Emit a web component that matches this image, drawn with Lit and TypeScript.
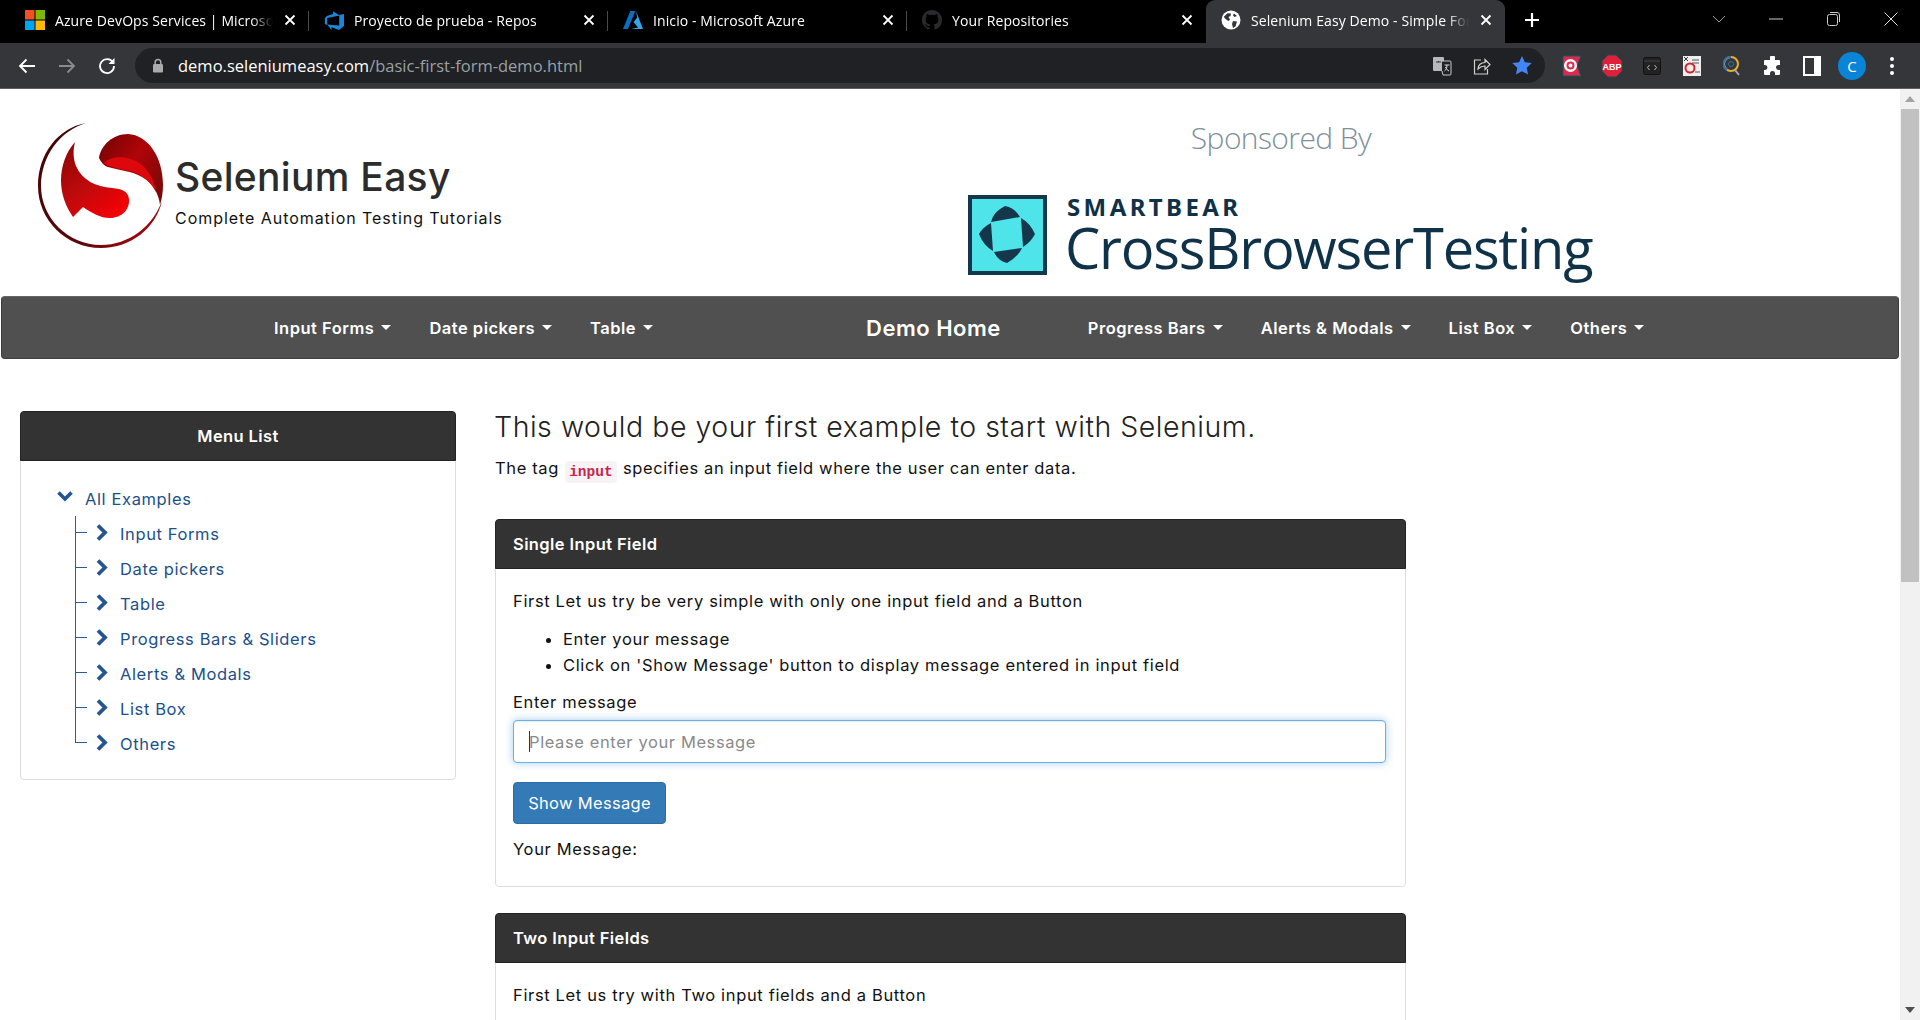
import { LitElement, html, css, svg } from 'lit';
import { customElement } from 'lit/decorators.js';

const chromeTabs = [
  { title: 'Azure DevOps Services | Microsoft Azure', icon: 'ms' },
  { title: 'Proyecto de prueba - Repos', icon: 'devops' },
  { title: 'Inicio - Microsoft Azure', icon: 'azure' },
  { title: 'Your Repositories', icon: 'github' },
  { title: 'Selenium Easy Demo - Simple Form to Automate', icon: 'globe', active: true },
];

const navLeft = ['Input Forms', 'Date pickers', 'Table'];
const navRight = ['Progress Bars', 'Alerts & Modals', 'List Box', 'Others'];
const menuItems = [
  'Input Forms',
  'Date pickers',
  'Table',
  'Progress Bars & Sliders',
  'Alerts & Modals',
  'List Box',
  'Others',
];

function tabIcon(name: string) {
  switch (name) {
    case 'ms':
      return html`<svg width="20" height="20" viewBox="0 0 20 20">
        <rect width="9.5" height="9.5" fill="#f25022" />
        <rect x="10.5" width="9.5" height="9.5" fill="#7fba00" />
        <rect y="10.5" width="9.5" height="9.5" fill="#00a4ef" />
        <rect x="10.5" y="10.5" width="9.5" height="9.5" fill="#ffb900" />
      </svg>`;
    case 'devops':
      return html`<svg width="20" height="20" viewBox="0 0 20 20">
        <path
          fill="#1a86d8"
          d="M20 4v12l-5 4-7.500-2.700V20L3.200 14.500l12 1V4.900zM15.800 5.500 9 1.200v2.900L2.700 5.900.8 8.400V14l2.400 1V8z"
        />
      </svg>`;
    case 'azure':
      return html`<svg width="20" height="20" viewBox="0 0 20 20">
        <path fill="#0a6fc2" d="M7.300 1h5L5 19H0z" />
        <path fill="#2fa7e8" d="M13 1l7 18h-12l7-1.500-4.500-5.500 3.700-4.500z" />
      </svg>`;
    case 'github':
      return html`<svg width="20" height="20" viewBox="0 0 16 16">
        <path
          fill="#2b2b2d"
          d="M8 0C3.580 0 0 3.580 0 8c0 3.540 2.290 6.530 5.470 7.590.4.070.55-.17.55-.38 0-.19-.01-.82-.01-1.490-2.010.37-2.530-.49-2.690-.94-.09-.23-.48-.94-.82-1.130-.28-.15-.68-.52-.01-.53.63-.01 1.080.58 1.230.82.720 1.210 1.870.87 2.330.66.070-.52.280-.87.510-1.070-1.780-.2-3.640-.89-3.640-3.950 0-.87.310-1.590.820-2.150-.08-.2-.36-1.020.08-2.120 0 0 .67-.21 2.200.82.640-.18 1.320-.27 2-.27s1.360.09 2 .27c1.530-1.040 2.200-.82 2.200-.82.440 1.100.16 1.920.08 2.120.51.560.82 1.270.82 2.150 0 3.070-1.870 3.750-3.650 3.950.29.250.54.730.54 1.480 0 1.070-.01 1.930-.01 2.200 0 .21.150.46.550.38A8.010 8.010 0 0 0 16 8c0-4.420-3.580-8-8-8z"
        />
      </svg>`;
    default:
      return html`<svg width="20" height="20" viewBox="0 0 20 20">
        <circle cx="10" cy="10" r="9.500" fill="#fff" />
        <path
          fill="#35363a"
          d="M3 6.500l3.500-3.300 3.500.3-.5 2.500-2 1 1.500 2.500-1.500 1.500-1-.5L3.500 8zM12 11l4 .5-1.500 5-2.500 1.500-1-4zM13 3.500l3 2.500-2.500 1-1.500-1.500z"
        />
      </svg>`;
  }
}

const closeX = html`<svg width="12" height="12" viewBox="0 0 12 12">
  <path d="M1.500 1.500l9 9M10.500 1.500l-9 9" stroke="#fff" stroke-width="1.800" />
</svg>`;

const caret = html`<svg class="caret" width="10" height="5" viewBox="0 0 10 5">
  <path d="M0 0h10L5 5z" fill="#fff" />
</svg>`;

const chevronRight = html`<svg class="chev" width="12" height="17" viewBox="0 0 12 17">
  <path d="M2 1.500l7 7-7 7" fill="none" stroke="#24558f" stroke-width="3.800" />
</svg>`;

const logoS = svg`
  <defs>
    <linearGradient id="lowGrad" x1="0.1" y1="0" x2="0.75" y2="1">
      <stop offset="0" stop-color="#8c0606" />
      <stop offset="0.55" stop-color="#c00a0c" />
      <stop offset="1" stop-color="#f50005" />
    </linearGradient>
    <linearGradient id="topGrad" x1="0" y1="0" x2="1" y2="0.8">
      <stop offset="0" stop-color="#6e0404" />
      <stop offset="0.5" stop-color="#b00408" />
      <stop offset="1" stop-color="#7a0808" />
    </linearGradient>
    <linearGradient id="ringGrad" x1="0" y1="0" x2="1" y2="1">
      <stop offset="0" stop-color="#3f0508" />
      <stop offset="0.65" stop-color="#5b060a" />
      <stop offset="1" stop-color="#c40a10" />
    </linearGradient>
  </defs>
  <path
    fill="url(#ringGrad)"
    d="M86 123C58 128 38 154 38 186C38 220 66 248 101 248C131 248 156 228 162 201C153 226 129 245 101 245C68 245 41 218 41 186C41 156 60 131 86 123Z"
  />
  <path
    fill="url(#topGrad)"
    d="M99 158C101 145 113 134 128 134C148 135 163 157 163 185C163 192 162 198 160 205C159 195 153 183 142 177C132 171 118 170 108 167C104 166 101 162 99 158Z"
  />
  <path
    fill="#dd080c"
    d="M104 163C112 155 130 155 142 165C150 172 155 183 156 192C150 180 140 174 130 171C120 168 110 168 104 163Z"
  />
  <path
    fill="url(#lowGrad)"
    d="M75 142C66 152 61 166 61 181C61 194 66 207 73 217L83 207C92 213 100 218 110 218C122 218 130 209 129 199C128 191 122 189 112 188C96 187 82 180 76 166C73 158 73 150 75 142Z"
  />
`;

@customElement('app-root')
export class AppRoot extends LitElement {
  static styles = css`
    :host {
      display: block;
      width: 1920px;
      height: 1020px;
      overflow: hidden;
      background: #fff;
      font-family: Inter, 'Liberation Sans', sans-serif;
      color: #111;
    }

    /* browser chrome */
    .tabstrip {
      height: 43px;
      background: #000;
      display: flex;
      align-items: stretch;
      padding-left: 10px;
      font-family: 'Open Sans', 'Noto Sans', sans-serif;
      font-size: 14px;
      color: #fff;
    }
    .tab {
      width: 299px;
      box-sizing: border-box;
      display: flex;
      align-items: center;
      padding: 0 9px 3px 15px;
      position: relative;
    }
    .tab:not(.active):not(.last)::after {
      content: '';
      position: absolute;
      right: 0;
      top: 11px;
      height: 20px;
      width: 1px;
      background: #4a4a4a;
    }
    .tab.active {
      background: #35363a;
      border-radius: 9px 9px 0 0;
    }
    .tab svg {
      flex: none;
    }
    .tab-title {
      flex: 1;
      margin-left: 10px;
      white-space: nowrap;
      overflow: hidden;
      letter-spacing: 0.1px;
      -webkit-mask-image: linear-gradient(to left, transparent 0, #000 22px);
    }
    .tab-close {
      width: 20px;
      margin-left: 7px;
      display: flex;
      justify-content: center;
    }
    .new-tab {
      width: 20px;
      margin-left: 19px;
      display: flex;
      align-items: center;
      padding-bottom: 3px;
    }
    .win-controls {
      margin-left: auto;
      display: flex;
      align-items: center;
      padding-bottom: 6px;
    }
    .win-controls span {
      width: 57.500px;
      display: flex;
      justify-content: center;
    }

    .toolbar {
      height: 46px;
      box-sizing: border-box;
      background: #35363a;
      border-bottom: 1px solid #5f6063;
      display: flex;
      align-items: center;
      padding-left: 7px;
      font-family: 'Open Sans', 'Noto Sans', sans-serif;
    }
    .tool {
      width: 40px;
      display: flex;
      align-items: center;
      justify-content: center;
      flex: none;
    }
    .omnibox {
      width: 1410px;
      box-sizing: border-box;
      height: 35px;
      margin: 0 7px 0 8px;
      padding-right: 3px;
      border-radius: 18px;
      background: #202124;
      display: flex;
      align-items: center;
      flex: none;
    }
    .lock {
      margin-left: 17px;
      width: 12px;
      flex: none;
    }
    .url {
      margin-left: 14px;
      flex: 1;
      font-size: 16.500px;
      color: #fff;
      white-space: nowrap;
    }
    .url span {
      color: #9aa0a6;
    }
    .avatar {
      width: 28px;
      height: 28px;
      border-radius: 50%;
      background: #0a84d6;
      color: #fff;
      font-size: 15px;
      display: flex;
      align-items: center;
      justify-content: center;
    }

    /* page */
    .viewport {
      display: flex;
      height: 931px;
    }
    .page {
      width: 1900px;
      height: 931px;
      overflow: hidden;
    }
    .scrollbar {
      width: 20px;
      background: #f1f1f1;
      display: flex;
      flex-direction: column;
      align-items: center;
    }
    .sb-btn {
      height: 20px;
      display: flex;
      align-items: center;
      justify-content: center;
    }
    .sb-thumb {
      width: 18px;
      height: 473px;
      background: #c1c1c1;
    }
    .sb-fill {
      flex: 1;
    }

    .site-header {
      height: 207px;
      display: flex;
    }
    .brand {
      width: 968px;
      flex: none;
      display: flex;
      padding: 33px 0 0 38px;
      box-sizing: border-box;
    }
    .brand svg {
      flex: none;
    }
    .brand-text {
      margin-left: 10px;
      padding-top: 29px;
    }
    .brand-name {
      font-size: 39px;
      line-height: 52px;
      font-weight: 500;
      letter-spacing: 0.3px;
      color: #2c2c2c;
      white-space: nowrap;
    }
    .brand-tag {
      font-size: 16px;
      line-height: 24px;
      margin-top: 3px;
      font-weight: 400;
      letter-spacing: 0.95px;
      color: #111;
      white-space: nowrap;
    }
    .sponsor {
      width: 640px;
      flex: none;
      font-family: 'Open Sans', 'Noto Sans', sans-serif;
      color: #0f3248;
    }
    .sponsor-title {
      width: 626px;
      text-align: center;
      font-size: 30px;
      line-height: 44px;
      font-weight: 300;
      color: #7f8f9b;
      margin-top: 27px;
      letter-spacing: -0.6px;
    }
    .sb-logo {
      display: flex;
      margin-top: 35px;
    }
    .sb-logo svg {
      flex: none;
    }
    .sb-words {
      margin-left: 20px;
      flex: none;
    }
    .sb-brand {
      font-size: 24px;
      line-height: 24px;
      font-weight: 700;
      letter-spacing: 3.400px;
      height: 24px;
      font-family: 'Noto Sans', sans-serif;
    }
    .sb-product {
      font-size: 56px;
      line-height: 58px;
      font-weight: 400;
      letter-spacing: -1.200px;
      margin: -1px 0 0 -2px;
      white-space: nowrap;
    }

    .nav {
      height: 63px;
      margin: 0 1px;
      background: #505050;
      border: 1px solid #3d3d3d;
      border-top-color: #666;
      border-radius: 4px;
      box-sizing: border-box;
      display: flex;
      align-items: center;
      padding-left: 272px;
      color: #fff;
      font-size: 16.500px;
      font-weight: 600;
      letter-spacing: 0.5px;
      white-space: nowrap;
    }
    .nav-item {
      display: flex;
      align-items: center;
      margin-right: 38px;
    }
    .caret {
      margin-left: 7px;
    }
    .nav-home {
      font-size: 22px;
      font-weight: 600;
      letter-spacing: 0.5px;
      margin: 0 87px 0 175px;
    }

    .content {
      display: flex;
      padding-top: 52px;
      align-items: flex-start;
    }
    .side {
      width: 436px;
      margin-left: 20px;
      flex: none;
      box-sizing: border-box;
      border: 1px solid #ddd;
      border-radius: 4px;
      padding-bottom: 18px;
      color: #1c4f8c;
    }
    .side-head {
      height: 50px;
      box-sizing: border-box;
      margin: -1px -1px 0;
      background: #333;
      border: 1px solid #222;
      border-radius: 4px 4px 0 0;
      color: #fff;
      font-size: 16.500px;
      font-weight: 600;
      letter-spacing: 0.4px;
      display: flex;
      align-items: center;
      justify-content: center;
    }
    .tree {
      padding: 20px 0 0 36px;
      font-size: 16.500px;
      font-weight: 400;
      letter-spacing: 0.62px;
    }
    .tree-root {
      height: 35px;
      display: flex;
      align-items: center;
    }
    .tree-root svg {
      flex: none;
      margin: 0 12px 4px 0;
    }
    .tree ul {
      list-style: none;
      margin: 0 0 0 18px;
      padding: 0;
    }
    .tree li {
      height: 35px;
      position: relative;
      display: flex;
      align-items: center;
      padding-left: 21px;
    }
    .tree li::before {
      content: '';
      position: absolute;
      left: 0;
      top: 0;
      width: 11px;
      height: 16px;
      border-left: 1px solid #2b5b9a;
      border-bottom: 1px solid #2b5b9a;
    }
    .tree li::after {
      content: '';
      position: absolute;
      left: 0;
      top: 16px;
      bottom: 0;
      border-left: 1px solid #2b5b9a;
    }
    .tree li:last-child::after {
      display: none;
    }
    .chev {
      margin-right: 12px;
      flex: none;
      margin-bottom: 2px;
    }

    .main {
      width: 911px;
      margin-left: 39px;
      flex: none;
    }
    h1 {
      margin: -1px 0 1px -1px;
      font-size: 28.500px;
      line-height: 34px;
      font-weight: 300;
      letter-spacing: 0.52px;
      color: #222;
      white-space: nowrap;
    }
    .lead {
      margin: 12px 0 0;
      height: 24px;
      font-size: 16.500px;
      line-height: 24px;
      font-weight: 400;
      letter-spacing: 0.62px;
    }
    code {
      font-family: 'Liberation Mono', monospace;
      font-size: 14.500px;
      line-height: 1;
      font-weight: 700;
      letter-spacing: 0;
      color: #c7254e;
      background: #f9f2f4;
      border-radius: 4px;
      padding: 3px 4px;
      margin: 0 1px;
      position: relative;
      top: 2px;
    }
    .panel {
      margin-top: 26px;
      border: 1px solid #ddd;
      border-radius: 4px;
      font-size: 16.500px;
      font-weight: 400;
      letter-spacing: 0.65px;
      line-height: 24px;
    }
    .lead + .panel {
      margin-top: 39px;
    }
    .panel-head {
      height: 50px;
      box-sizing: border-box;
      margin: -1px -1px 0;
      background: #333;
      border: 1px solid #222;
      border-radius: 4px 4px 0 0;
      color: #fff;
      font-weight: 600;
      letter-spacing: 0.4px;
      padding-left: 17px;
      display: flex;
      align-items: center;
    }
    .panel-body {
      padding: 20px 17px 25px;
    }
    .panel-body p {
      margin: 0;
    }
    .panel-body ul {
      margin: 14px 0 11px;
      padding-left: 50px;
    }
    .panel-body li {
      height: 26px;
      line-height: 24px;
    }
    .field {
      position: relative;
      margin-top: 6px;
    }
    input {
      display: block;
      width: 873px;
      height: 43px;
      box-sizing: border-box;
      padding: 0 15px;
      border: 1px solid #66afe9;
      border-radius: 4px;
      outline: none;
      box-shadow:
        inset 0 1px 1px rgba(0, 0, 0, 0.075),
        0 0 8px rgba(102, 175, 233, 0.6);
      font: inherit;
      letter-spacing: 0.6px;
    }
    input::placeholder {
      color: #8a8a8a;
      opacity: 1;
    }
    .cursor {
      position: absolute;
      left: 16px;
      top: 11px;
      width: 1px;
      height: 21px;
      background: #333;
    }
    button {
      display: block;
      margin-top: 19px;
      height: 42px;
      width: 153px;
      padding: 0;
      border: 1px solid #2e6da4;
      border-radius: 4px;
      background: #337ab7;
      color: #fff;
      font: inherit;
      font-weight: 400;
      letter-spacing: 0.3px;
    }
    .result {
      margin-top: 13px;
    }
    .panel-body.more {
      padding-bottom: 120px;
    }
  `;

  private renderTabs() {
    return chromeTabs.map(
      (tab, i) => html`<div
        class="tab ${tab.active ? 'active' : ''} ${i === 3 ? 'last' : ''}"
      >
        ${tabIcon(tab.icon)}
        <div class="tab-title">${tab.title}</div>
        <div class="tab-close">${closeX}</div>
      </div>`
    );
  }

  private renderChrome() {
    return html`
      <div class="tabstrip">
        ${this.renderTabs()}
        <div class="new-tab">
          <svg width="16" height="16" viewBox="0 0 16 16">
            <path d="M8 1v14M1 8h14" stroke="#fff" stroke-width="2.200" />
          </svg>
        </div>
        <div class="win-controls">
          <span>
            <svg width="14" height="8" viewBox="0 0 14 8">
              <path d="M1 1l6 6 6-6" fill="none" stroke="#9a9a9a" />
            </svg>
          </span>
          <span>
            <svg width="14" height="2" viewBox="0 0 14 2"><path d="M0 1h14" stroke="#ccc" /></svg>
          </span>
          <span>
            <svg width="13" height="14" viewBox="0 0 13 14">
              <rect x="0.500" y="2.500" width="10" height="11" rx="2" fill="none" stroke="#ccc" />
              <path d="M3 .5h7a2.500 2.500 0 0 1 2.500 2.500v7" fill="none" stroke="#ccc" />
            </svg>
          </span>
          <span>
            <svg width="14" height="14" viewBox="0 0 14 14">
              <path d="M.5.5l13 13M13.500.5l-13 13" stroke="#ddd" />
            </svg>
          </span>
        </div>
      </div>
      <div class="toolbar">
        <div class="tool">
          <svg width="18" height="16" viewBox="0 0 18 16">
            <path d="M17 8H2M8.500 1.500 2 8l6.500 6.500" fill="none" stroke="#fff" stroke-width="1.800" />
          </svg>
        </div>
        <div class="tool">
          <svg width="18" height="16" viewBox="0 0 18 16">
            <path d="M1 8h15M9.500 1.500 16 8l-6.500 6.500" fill="none" stroke="#8a8b8d" stroke-width="1.800" />
          </svg>
        </div>
        <div class="tool">
          <svg width="18" height="18" viewBox="0 0 18 18">
            <path d="M15 5.500A7 7 0 1 0 16 9" fill="none" stroke="#fff" stroke-width="1.800" />
            <path d="M16.500 1v6h-6z" fill="#fff" />
          </svg>
        </div>
        <div class="omnibox">
          <svg class="lock" width="12" height="15" viewBox="0 0 12 15">
            <path d="M3.200 6V4.200a2.800 2.800 0 0 1 5.600 0V6" fill="none" stroke="#aaa" stroke-width="1.500" />
            <rect x="1" y="6" width="10" height="8.500" rx="1.200" fill="#aaa" />
          </svg>
          <div class="url">demo.seleniumeasy.com<span>/basic-first-form-demo.html</span></div>
          <div class="tool">
            <svg width="20" height="20" viewBox="0 0 20 20">
              <rect x="1" y="1" width="11" height="14" rx="1" fill="#b8b8b8" />
              <path d="M10 5h8a1 1 0 0 1 1 1v12a1 1 0 0 1-1 1h-7l-1-4" fill="#202124" stroke="#c8c8c8" />
              <path d="M4 6h5M6.500 5v1" stroke="#333" fill="none" />
              <path d="M12.500 9h5M15 9c0 3-1 5-2.500 6M13.500 11c.8 2 2 3.300 3.500 4" stroke="#ddd" fill="none" />
            </svg>
          </div>
          <div class="tool">
            <svg width="18" height="18" viewBox="0 0 18 18">
              <path d="M8 3H1.500v14h13v-5" fill="none" stroke="#d0d0d0" stroke-width="1.200" />
              <path d="M5 12c0-4 3-6.500 7-6.500V2.500l5 5-5 5V9c-3 0-5 1-7 3z" fill="none" stroke="#d0d0d0" stroke-width="1.200" />
            </svg>
          </div>
          <div class="tool">
            <svg width="20" height="19" viewBox="0 0 20 19">
              <path d="M10 0l2.900 6.300 6.900.8-5.100 4.700 1.400 6.800L10 15.200l-6.100 3.400 1.400-6.800L.2 7.100l6.900-.8z" fill="#4285f4" />
            </svg>
          </div>
        </div>
        <div class="tool">
          <svg width="22" height="24" viewBox="0 0 22 24">
            <path d="M2 2h18l-4 10 4 10H2z" fill="#e0284f" stroke="#0d5b5b" />
            <circle cx="9.500" cy="11.500" r="6.500" fill="#fff" />
            <circle cx="9.500" cy="11.500" r="3" fill="none" stroke="#e0284f" stroke-width="2" />
          </svg>
        </div>
        <div class="tool">
          <svg width="22" height="24" viewBox="0 0 22 24">
            <path d="M7 1h8l6 6v10l-6 6H7l-6-6V7z" fill="#e01f3d" stroke="#1d4d4d" />
            <text x="11" y="15.500" text-anchor="middle" font-size="9" font-weight="700" fill="#fff" font-family="Liberation Sans">ABP</text>
          </svg>
        </div>
        <div class="tool">
          <svg width="18" height="18" viewBox="0 0 18 18">
            <rect x="0.500" y="0.500" width="17" height="17" rx="2" fill="#222" stroke="#111" />
            <path d="M1 4h16" stroke="#444" />
            <path d="M6.500 8 4.500 10.500 6.500 13M11.500 8l2 2.500-2 2.500" fill="none" stroke="#bbb" />
          </svg>
        </div>
        <div class="tool">
          <svg width="18" height="20" viewBox="0 0 18 20">
            <rect width="18" height="20" fill="#eee" />
            <circle cx="7" cy="12" r="4.500" fill="none" stroke="#d8222a" stroke-width="2" />
            <path d="M1 1l4 4M5 1 1 5" stroke="#333" />
            <path d="M9 4h7M9 7h7M12 16h5" stroke="#555" />
          </svg>
        </div>
        <div class="tool">
          <svg width="18" height="20" viewBox="0 0 18 20">
            <circle cx="8" cy="8" r="7" fill="none" stroke="#e8b030" stroke-width="2" />
            <path d="M8 1A7 7 0 0 0 4 14" fill="none" stroke="#2c6fb5" stroke-width="2" />
            <circle cx="8" cy="8" r="2.500" fill="none" stroke="#2c6fb5" />
            <path d="M12 14l4 5" stroke="#aaa" stroke-width="2" />
          </svg>
        </div>
        <div class="tool">
          <svg width="20" height="20" viewBox="0 0 20 20">
            <path d="M8 1.500a2.500 2.500 0 0 1 5 0V4h4a1 1 0 0 1 1 1v4h-1.500a2.500 2.500 0 0 0 0 5H18v4a1 1 0 0 1-1 1h-4v-1.500a2.500 2.500 0 0 0-5 0V19H3a1 1 0 0 1-1-1v-4h1a2.500 2.500 0 0 0 0-5H2V5a1 1 0 0 1 1-1h5z" fill="#fff" />
          </svg>
        </div>
        <div class="tool">
          <svg width="18" height="20" viewBox="0 0 18 20">
            <rect width="18" height="20" fill="#fff" />
            <rect x="2" y="2" width="9" height="16" fill="#35363a" />
          </svg>
        </div>
        <div class="tool"><div class="avatar">C</div></div>
        <div class="tool">
          <svg width="6" height="20" viewBox="0 0 6 20">
            <circle cx="3" cy="3" r="2" fill="#fff" />
            <circle cx="3" cy="10" r="2" fill="#fff" />
            <circle cx="3" cy="17" r="2" fill="#fff" />
          </svg>
        </div>
      </div>
    `;
  }

  private renderHeader() {
    return html`
      <div class="site-header">
        <div class="brand">
          <svg width="127" height="127" viewBox="38 122 127 127">${logoS}</svg>
          <div class="brand-text">
            <div class="brand-name">Selenium Easy</div>
            <div class="brand-tag">Complete Automation Testing Tutorials</div>
          </div>
        </div>
        <div class="sponsor">
          <div class="sponsor-title">Sponsored By</div>
          <div class="sb-logo">
            <svg width="79" height="80" viewBox="0 0 79 80">
              <rect x="2" y="2" width="75" height="76" fill="#4fe3ea" stroke="#14374b" stroke-width="4" />
              <path d="M23 27Q25 17 37 11Q47 13 52 22Z" fill="#14374b" />
              <path d="M53 23Q62 28 67 39Q63 47 55 52Z" fill="#14374b" />
              <path d="M54 53Q50 62 39 68Q30 66 26 57Z" fill="#14374b" />
              <path d="M25 56Q15 50 11 39Q15 32 23 28Z" fill="#14374b" />
            </svg>
            <div class="sb-words">
              <div class="sb-brand">SMARTBEAR</div>
              <div class="sb-product">CrossBrowserTesting</div>
            </div>
          </div>
        </div>
      </div>
      <nav class="nav">
        ${navLeft.map((label) => html`<div class="nav-item">${label}${caret}</div>`)}
        <div class="nav-home">Demo Home</div>
        ${navRight.map((label) => html`<div class="nav-item">${label}${caret}</div>`)}
      </nav>
    `;
  }

  private renderSide() {
    return html`
      <aside class="side">
        <div class="side-head">Menu List</div>
        <div class="tree">
          <div class="tree-root">
            <svg width="16" height="11" viewBox="0 0 16 11">
              <path d="M1.500 1.500l6.500 6.500 6.500-6.500" fill="none" stroke="#24558f" stroke-width="3.600" />
            </svg>
            All Examples
          </div>
          <ul>
            ${menuItems.map((item) => html`<li>${chevronRight}${item}</li>`)}
          </ul>
        </div>
      </aside>
    `;
  }

  private renderMain() {
    return html`
      <main class="main">
        <h1>This would be your first example to start with Selenium.</h1>
        <p class="lead">
          The tag <code>input</code> specifies an input field where the user can enter data.
        </p>
        <section class="panel">
          <div class="panel-head">Single Input Field</div>
          <div class="panel-body">
            <p>First Let us try be very simple with only one input field and a Button</p>
            <ul>
              <li>Enter your message</li>
              <li>Click on 'Show Message' button to display message entered in input field</li>
            </ul>
            <div>Enter message</div>
            <div class="field">
              <input type="text" placeholder="Please enter your Message" />
              <div class="cursor"></div>
            </div>
            <button>Show Message</button>
            <div class="result">Your Message:</div>
          </div>
        </section>
        <section class="panel">
          <div class="panel-head">Two Input Fields</div>
          <div class="panel-body more">
            <p>First Let us try with Two input fields and a Button</p>
          </div>
        </section>
      </main>
    `;
  }

  render() {
    return html`
      ${this.renderChrome()}
      <div class="viewport">
        <div class="page">
          ${this.renderHeader()}
          <div class="content">${this.renderSide()} ${this.renderMain()}</div>
        </div>
        <div class="scrollbar">
          <div class="sb-btn">
            <svg width="10" height="6" viewBox="0 0 10 6"><path d="M5 0l5 6H0z" fill="#a3a3a3" /></svg>
          </div>
          <div class="sb-thumb"></div>
          <div class="sb-fill"></div>
          <div class="sb-btn">
            <svg width="10" height="6" viewBox="0 0 10 6"><path d="M0 0h10L5 6z" fill="#505050" /></svg>
          </div>
        </div>
      </div>
    `;
  }
}
